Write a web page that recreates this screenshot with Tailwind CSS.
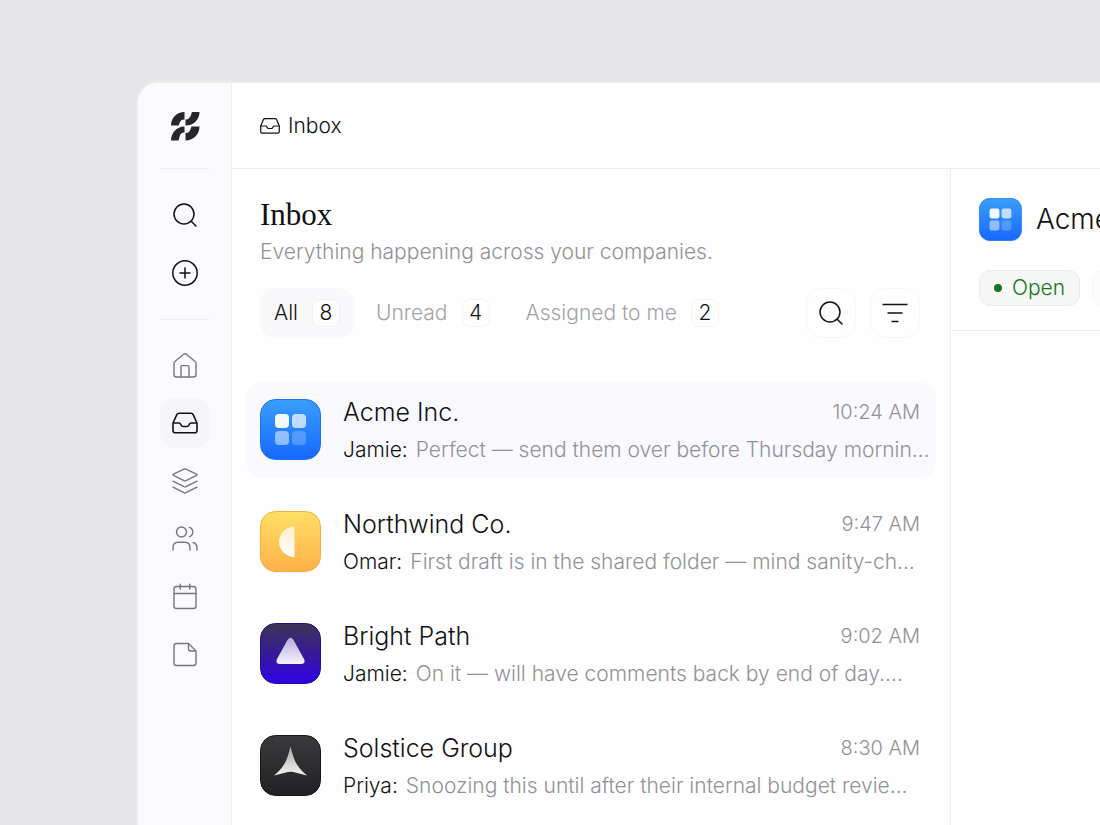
<!DOCTYPE html>
<html lang="en">
<head>
    <meta charset="UTF-8">
    <meta name="viewport" content="width=device-width, initial-scale=1.0">
    <title>Inbox</title>
    <script src="https://cdn.jsdelivr.net/npm/@tailwindcss/browser@4"></script>
</head>
<body class="h-screen overflow-hidden bg-[#e6e6e8] pl-[138px] pt-[83px] font-['Inter','Liberation_Sans',sans-serif] font-light text-[#111113]">
<div class="flex h-full overflow-hidden rounded-tl-[20px] bg-[#fefefe] shadow-[0_0_4px_rgba(255,255,255,0.8)]">

    <!-- Sidebar -->
    <nav aria-label="Main" class="flex w-[94px] shrink-0 flex-col items-center border-r border-[#eeeef1] bg-[#fbfafd]">
        <a href="#" aria-label="Home page" class="flex h-[85px] items-center">
            <svg class="size-[30px]" viewBox="0 0 30 30" fill="#27272a">
                <path d="M1 14.5C1 7 6.500 1 14.500 1V8.500C11.500 8.500 10 10 9.500 12.500L8.500 14.500Z"/>
                <path d="M29.500 1C29.500 8.500 24 14.500 15.500 14.500V8.500C18.500 8.500 20 6.500 21 4L22 1Z"/>
                <path d="M1 29.500C1 22 6.500 15.500 14.500 15.500V21.500C11.500 21.500 10 23.500 9.500 26L8.500 29.500Z"/>
                <path d="M29.500 15.500C29.500 23 24 29.500 15.500 29.500V22C18.500 22 20 20.500 20.500 18L21.500 15.500Z"/>
            </svg>
        </a>
        <div class="h-px w-[50px] bg-[#f0f0f2]"></div>
        <div class="flex flex-col gap-2 py-[21px]">
            <button type="button" aria-label="Search" class="flex size-[50px] items-center justify-center rounded-2xl">
                <svg class="size-7" viewBox="0 0 28 28" fill="none" stroke="currentColor" stroke-width="1.500" stroke-linecap="round"><circle cx="13" cy="13" r="10"/><path d="M20.500 20.500L25 25"/></svg>
            </button>
            <button type="button" aria-label="Create" class="flex size-[50px] items-center justify-center rounded-2xl">
                <svg class="size-7" viewBox="0 0 28 28" fill="none" stroke="currentColor" stroke-width="1.500" stroke-linecap="round"><circle cx="14" cy="14" r="12.200"/><path d="M14 9v10M9 14h10"/></svg>
            </button>
        </div>
        <div class="h-px w-[50px] bg-[#f0f0f2]"></div>
        <div class="flex flex-col gap-2 py-5 text-[#77777b]">
            <a href="#" aria-label="Home" class="flex size-[50px] items-center justify-center rounded-2xl">
                <svg class="size-7" viewBox="0 0 28 28" fill="none" stroke="currentColor" stroke-width="1.400" stroke-linejoin="round"><path d="M3 12.500c0-1 .4-1.700 1.200-2.300l8.400-7c.9-.7 1.900-.7 2.800 0l8.400 7c.8.600 1.200 1.300 1.200 2.300V23.500c0 1.600-.9 2.500-2.500 2.500h-17C3.900 26 3 25.100 3 23.500Z"/><path d="M10 26V15.800c0-.8.400-1.200 1.200-1.200h5.600c.8 0 1.200.4 1.200 1.200V26"/></svg>
            </a>
            <a href="#" aria-label="Inbox" aria-current="page" class="flex size-[50px] items-center justify-center rounded-2xl bg-[#f6f5f8] text-[#111113]">
                <svg class="size-7" viewBox="0 0 28 28" fill="none" stroke="currentColor" stroke-width="1.600" stroke-linejoin="round"><path d="M2 14L5.700 5.800C6.200 4.700 6.900 4.300 8 4.300H20c1.100 0 1.800.4 2.300 1.500L26 14v7.500c0 1.500-.8 2.300-2.300 2.300H4.300C2.800 23.800 2 23 2 21.500Z"/><path d="M2 14h6c1 0 1.300.4 1.700 1.300l.4.900c.4.900.9 1.300 1.900 1.300h4c1 0 1.500-.4 1.900-1.300l.4-.9C18.700 14.400 19 14 20 14h6"/></svg>
            </a>
            <a href="#" aria-label="Projects" class="flex size-[50px] items-center justify-center rounded-2xl">
                <svg class="size-7" viewBox="0 0 28 28" fill="none" stroke="currentColor" stroke-width="1.400" stroke-linecap="round" stroke-linejoin="round"><path d="M13 2.200q1-.5 2 0l10.500 5q1 .6 0 1.200l-10.500 5.200q-1 .5-2 0L2.500 8.400q-1-.6 0-1.200Z"/><path d="M2 14.200L13 19.600q1 .5 2 0L26 14.200"/><path d="M2 20.200L13 25.700q1 .5 2 0L26 20.200"/></svg>
            </a>
            <a href="#" aria-label="People" class="flex size-[50px] items-center justify-center rounded-2xl">
                <svg class="size-7" viewBox="0 0 28 28" fill="none" stroke="currentColor" stroke-width="1.400" stroke-linecap="round"><circle cx="10.500" cy="7" r="5"/><path d="M18.500 2.300a5 5 0 0 1 0 9.400"/><path d="M2 25v-2.500c0-3.500 1.800-5.300 5.300-5.300h6.400c3.500 0 5.300 1.800 5.300 5.300V25"/><path d="M22 17.500c2.700.6 4 2.300 4 5V25"/></svg>
            </a>
            <a href="#" aria-label="Calendar" class="flex size-[50px] items-center justify-center rounded-2xl">
                <svg class="size-7" viewBox="0 0 28 28" fill="none" stroke="currentColor" stroke-width="1.400" stroke-linecap="round"><rect x="3" y="3.500" width="22" height="22" rx="2.500"/><path d="M3 10.500h22M9.300 1.300v4.700M18.700 1.300v4.700"/></svg>
            </a>
            <a href="#" aria-label="Files" class="flex size-[50px] items-center justify-center rounded-2xl">
                <svg class="size-7" viewBox="0 0 28 28" fill="none" stroke="currentColor" stroke-width="1.400" stroke-linejoin="round"><path d="M17.500 2.500H5.500C3.900 2.500 3 3.400 3 5v17C3 23.600 3.900 24.500 5.500 24.500h17c1.600 0 2.500-.9 2.500-2.500V10Z"/><path d="M17.500 2.500v5.500c0 1.300.7 2 2 2H25"/></svg>
            </a>
        </div>
    </nav>

    <div class="flex min-w-0 flex-1 flex-col">
        <!-- Top bar -->
        <header class="flex h-[86px] shrink-0 items-center gap-2 border-b border-[#eeeef1] pl-7 text-[21px]">
            <svg class="size-5" viewBox="0 0 28 28" fill="none" stroke="currentColor" stroke-width="1.700" stroke-linejoin="round"><path d="M1 14L4.700 5.300C5.200 4.200 5.900 3.800 7 3.800H21c1.100 0 1.800.4 2.300 1.500L27 14v7.800c0 1.500-.8 2.300-2.300 2.300H3.300C1.800 24.100 1 23.300 1 21.800Z"/><path d="M1 14h7c1 0 1.300.4 1.700 1.300l.4.900c.4.900.9 1.300 1.900 1.300h4c1 0 1.500-.4 1.900-1.300l.4-.9C18.700 14.400 19 14 20 14h7"/></svg>
            <span>Inbox</span>
        </header>

        <div class="flex min-h-0 flex-1">
            <!-- Conversations -->
            <main class="min-w-0 flex-1 border-r border-[#eeeef1] px-3.5 pt-[27px]">
                <div class="pr-4 pl-3.5">
                    <h1 class="font-['Liberation_Serif',serif] text-[31px] leading-[38px] font-normal">Inbox</h1>
                    <p class="text-[21px] leading-9 text-[#929296]">Everything happening across your companies.</p>
                    <div class="mt-[18px] flex items-center text-[21px] text-[#a3a3a7]">
                        <button type="button" class="flex h-[50px] items-center gap-3.5 rounded-2xl bg-[#f9f8fb] px-3.5 text-[#111113]">All <span class="flex size-7 items-center justify-center rounded-lg border border-[#f1f0f3] bg-[#fefefe]">8</span></button>
                        <button type="button" class="ml-[22px] flex h-[50px] items-center gap-3.5">Unread <span class="flex size-7 items-center justify-center rounded-lg border border-[#f4f3f6] text-[#111113]">4</span></button>
                        <button type="button" class="ml-9 flex h-[50px] items-center gap-3.5">Assigned to me <span class="flex size-7 items-center justify-center rounded-lg border border-[#f4f3f6] text-[#111113]">2</span></button>
                        <button type="button" aria-label="Search conversations" class="ml-auto flex size-[50px] items-center justify-center rounded-2xl border border-[#f6f5f8] text-[#111113]">
                            <svg class="size-7" viewBox="0 0 28 28" fill="none" stroke="currentColor" stroke-width="1.500" stroke-linecap="round"><circle cx="13" cy="13" r="10"/><path d="M20.500 20.500L25 25"/></svg>
                        </button>
                        <button type="button" aria-label="Filter" class="ml-3.5 flex size-[50px] items-center justify-center rounded-2xl border border-[#f6f5f8] text-[#111113]">
                            <svg class="size-7" viewBox="0 0 28 28" fill="none" stroke="currentColor" stroke-width="1.500"><path d="M1.500 5.500h25M6.500 14h15M10.500 22.500h7"/></svg>
                        </button>
                    </div>
                </div>

                <ul class="mt-11 flex flex-col gap-4">
                    <li>
                        <a href="#" class="flex h-24 items-start gap-[22px] rounded-2xl bg-[#faf9fd] pt-[17px] pr-4 pl-3.5">
                            <svg class="size-[61px] shrink-0" viewBox="0 0 61 61">
                                <defs><linearGradient id="blue" x1="0" y1="0" x2="0" y2="1"><stop stop-color="#3a9efb"/><stop offset="1" stop-color="#1668ff"/></linearGradient></defs>
                                <rect x=".5" y=".5" width="60" height="60" rx="15" fill="url(#blue)" stroke="#1d74ea"/>
                                <g fill="#fff"><rect x="15" y="15" width="14" height="14" rx="4" opacity=".95"/><rect x="32" y="15" width="14" height="14" rx="4" opacity=".7"/><rect x="15" y="32" width="14" height="14" rx="4" opacity=".5"/><rect x="32" y="32" width="14" height="14" rx="4" opacity=".22"/></g>
                            </svg>
                            <div class="min-w-0 flex-1">
                                <div class="flex items-center justify-between leading-[26px]"><h2 class="text-[25px] leading-[26px]">Acme Inc.</h2><time class="text-[20px] leading-[26px] text-[#929296]">10:24 AM</time></div>
                                <p class="mt-[9px] text-[21px] leading-8 whitespace-nowrap text-[#929296]"><span class="mr-2 text-[#111113]">Jamie:</span>Perfect — send them over before Thursday mornin…</p>
                            </div>
                        </a>
                    </li>
                    <li>
                        <a href="#" class="flex h-24 items-start gap-[22px] rounded-2xl pt-[17px] pr-4 pl-3.5">
                            <svg class="size-[61px] shrink-0" viewBox="0 0 61 61">
                                <defs><linearGradient id="amber" x1="0" y1="0" x2="0" y2="1"><stop stop-color="#ffe066"/><stop offset="1" stop-color="#ffb04a"/></linearGradient><linearGradient id="moon" x1="0" y1="0" x2="0" y2="1"><stop stop-color="#fff" stop-opacity=".7"/><stop offset="1" stop-color="#fff"/></linearGradient></defs>
                                <rect x=".5" y=".5" width="60" height="60" rx="15" fill="url(#amber)" stroke="#f6ae42"/>
                                <path d="M34.500 15.500V46C26 46 19 39 19 30.800S26 15.500 34.500 15.500Z" fill="url(#moon)"/>
                            </svg>
                            <div class="min-w-0 flex-1">
                                <div class="flex items-center justify-between"><h2 class="text-[25px] leading-[26px]">Northwind Co.</h2><time class="text-[20px] leading-[26px] text-[#929296]">9:47 AM</time></div>
                                <p class="mt-[9px] text-[21px] leading-8 whitespace-nowrap text-[#929296]"><span class="mr-2 text-[#111113]">Omar:</span>First draft is in the shared folder — mind sanity-ch…</p>
                            </div>
                        </a>
                    </li>
                    <li>
                        <a href="#" class="flex h-24 items-start gap-[22px] rounded-2xl pt-[17px] pr-4 pl-3.5">
                            <svg class="size-[61px] shrink-0" viewBox="0 0 61 61">
                                <defs><linearGradient id="violet" x1="0" y1="0" x2="0" y2="1"><stop stop-color="#3b3553"/><stop offset=".5" stop-color="#361a98"/><stop offset="1" stop-color="#3000e8"/></linearGradient><linearGradient id="peak" x1="0" y1="0" x2="0" y2="1"><stop stop-color="#b9aedb"/><stop offset="1" stop-color="#f6f3ff"/></linearGradient></defs>
                                <rect x=".5" y=".5" width="60" height="60" rx="15" fill="url(#violet)" stroke="#21128a"/>
                                <path d="M27.500 17Q30.500 12.500 33.500 17L44 36Q46 40.500 41.500 41H19.500Q15 40.500 17 36Z" fill="url(#peak)"/>
                            </svg>
                            <div class="min-w-0 flex-1">
                                <div class="flex items-center justify-between"><h2 class="text-[25px] leading-[26px]">Bright Path</h2><time class="text-[20px] leading-[26px] text-[#929296]">9:02 AM</time></div>
                                <p class="mt-[9px] text-[21px] leading-8 whitespace-nowrap text-[#929296]"><span class="mr-2 text-[#111113]">Jamie:</span>On it — will have comments back by end of day.…</p>
                            </div>
                        </a>
                    </li>
                    <li>
                        <a href="#" class="flex h-24 items-start gap-[22px] rounded-2xl pt-[17px] pr-4 pl-3.5">
                            <svg class="size-[61px] shrink-0" viewBox="0 0 61 61">
                                <defs><linearGradient id="dark" x1="0" y1="0" x2="0" y2="1"><stop stop-color="#3a3a3d"/><stop offset="1" stop-color="#212123"/></linearGradient><linearGradient id="star" x1="0" y1="0" x2="0" y2="1"><stop stop-color="#a9a9ab"/><stop offset="1" stop-color="#f2f2f2"/></linearGradient></defs>
                                <rect x=".5" y=".5" width="60" height="60" rx="15" fill="url(#dark)" stroke="#161618"/>
                                <path d="M30.500 11.500C32.500 19 34 25 37 29.500C40 34 43 37 47 40.500L33 37Q30.500 36.300 28 37L14 40.500C18 37 21 34 24 29.500C27 25 28.500 19 30.500 11.500Z" fill="url(#star)"/>
                            </svg>
                            <div class="min-w-0 flex-1">
                                <div class="flex items-center justify-between"><h2 class="text-[25px] leading-[26px]">Solstice Group</h2><time class="text-[20px] leading-[26px] text-[#929296]">8:30 AM</time></div>
                                <p class="mt-[9px] text-[21px] leading-8 whitespace-nowrap text-[#929296]"><span class="mr-2 text-[#111113]">Priya:</span>Snoozing this until after their internal budget revie…</p>
                            </div>
                        </a>
                    </li>
                </ul>
            </main>

            <!-- Open conversation -->
            <section aria-label="Conversation" class="w-[149px] shrink-0 overflow-hidden">
                <div class="flex flex-col gap-[29px] border-b border-[#ececef] pt-7 pb-6 pl-7 whitespace-nowrap">
                    <div class="flex h-11 items-center gap-3.5">
                        <svg class="size-[43px] shrink-0" viewBox="0 0 61 61">
                            <rect x=".5" y=".5" width="60" height="60" rx="15" fill="url(#blue)" stroke="#1d74ea"/>
                            <g fill="#fff"><rect x="15" y="15" width="14" height="14" rx="3" opacity=".95"/><rect x="32" y="15" width="14" height="14" rx="3" opacity=".7"/><rect x="15" y="32" width="14" height="14" rx="3" opacity=".5"/><rect x="32" y="32" width="14" height="14" rx="3" opacity=".22"/></g>
                        </svg>
                        <h2 class="text-[28px] leading-9">Acme Inc.</h2>
                    </div>
                    <div class="flex gap-3">
                        <span class="flex h-9 shrink-0 items-center gap-2.5 rounded-xl border border-[#e9ebec] bg-[#f6f7f7] px-3.5 text-[21px] text-[#17751f]"><span class="size-2 rounded-full bg-[#17751f]"></span>Open</span>
                        <span class="h-9 w-24 shrink-0 rounded-xl border border-[#f4f3f6] bg-[#fbfafd]"></span>
                    </div>
                </div>
            </section>
        </div>
    </div>
</div>
</body>
</html>
